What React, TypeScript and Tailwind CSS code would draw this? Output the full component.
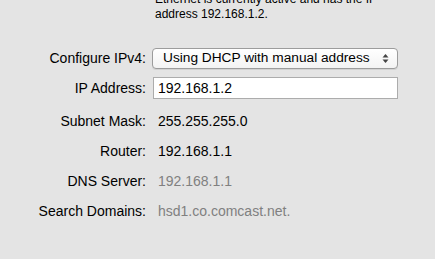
import React from "react";

const rows: { label: string; value: string; muted?: boolean }[] = [
  { label: "Subnet Mask:", value: "255.255.255.0" },
  { label: "Router:", value: "192.168.1.1" },
  { label: "DNS Server:", value: "192.168.1.1", muted: true },
  { label: "Search Domains:", value: "hsd1.co.comcast.net.", muted: true },
];

const App = () => {
  return (
    <div className="w-[435px] h-[259px] overflow-hidden bg-[#e4e4e4] text-[14px] text-black font-['Liberation_Sans',sans-serif]">
      {/* status text, first line is cut off by the window */}
      <div className="-mt-[8px] pl-[155px] text-[12px] leading-[15px]">
        <div>Ethernet is currently active and has the IP</div>
        <div>address 192.168.1.2.</div>
      </div>

      <div className="mt-[21px] grid grid-cols-[146px_1fr] items-center">
        <div className="h-[30px] flex items-center justify-end">Configure IPv4:</div>
        <div className="h-[30px] flex items-center pl-[6px]">
          <div className="w-[246px] h-[21px] rounded-[4px] border border-[#9c9c9c] bg-gradient-to-b from-white to-[#f3f3f3] shadow-[0_1px_0_rgba(0,0,0,0.08)] flex items-center pl-[10px] pr-[8px]">
            <span className="flex-1 text-[13.7px]">Using DHCP with manual address</span>
            <svg width="7" height="11" viewBox="0 0 7 11">
              <path d="M3.5 1 L6.5 4.5 L0.5 4.5 Z" fill="#444" />
              <path d="M3.5 10 L6.5 6.5 L0.5 6.5 Z" fill="#444" />
            </svg>
          </div>
        </div>

        <div className="h-[33px] pb-[3px] flex items-center justify-end">IP Address:</div>
        <div className="h-[33px] pb-[3px] flex items-center pl-[7px]">
          <div className="w-[245px] h-[22px] border border-[#acacac] bg-white flex items-center pl-[4px]">
            192.168.1.2
          </div>
        </div>

        {rows.map((r) => (
          <React.Fragment key={r.label}>
            <div className="h-[30px] flex items-center justify-end">{r.label}</div>
            <div
              className={`h-[30px] flex items-center pl-[12px] ${
                r.muted ? "text-[#808080]" : "text-black"
              }`}
            >
              {r.value}
            </div>
          </React.Fragment>
        ))}
      </div>
    </div>
  );
};

export default App;
